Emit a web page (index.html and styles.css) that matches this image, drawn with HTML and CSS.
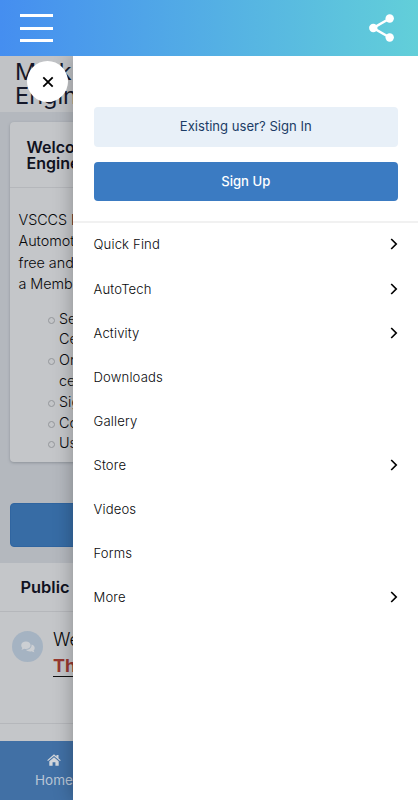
FILE: index.html
```html
<!DOCTYPE html>
<html lang="en">
<head>
<meta charset="utf-8">
<meta name="viewport" content="width=device-width">
<title>Menu</title>
<link rel="stylesheet" href="styles.css">
</head>
<body>
<svg width="0" height="0" class="defs"><symbol id="chev" viewBox="0 0 8 12"><path d="m1.200 1 5 5-5 5" fill="none" stroke="#000" stroke-width="1.700"/></symbol></svg>
<div class="app">
  <header class="topbar">
    <div class="burger"><i></i><i></i><i></i></div>
    <svg class="share" width="26" height="28" viewBox="0 0 26 28"><path d="M20.700 4.500 4.300 14 20.700 23.500" fill="none" stroke="#fff" stroke-width="2.600"/><g fill="#fff"><circle cx="20.700" cy="4.500" r="4.200"/><circle cx="4.300" cy="14" r="4.200"/><circle cx="20.700" cy="23.500" r="4.200"/></g></svg>
  </header>
  <div class="stage">
    <main class="page">
      <h1>Mark<br>Engin</h1>
      <section class="card">
        <h2>Welco<br>Engine</h2>
        <div class="copy">
          <p>VSCCS I<br>Automot<br>free and<br>a Memb</p>
          <ul>
            <li>Se<br>Ce</li>
            <li>On<br>ce</li>
            <li>Sig</li>
            <li>Co</li>
            <li>Us</li>
          </ul>
        </div>
      </section>
      <div class="cta"></div>
      <section class="public">
        <h3>Public</h3>
        <div class="topic">
          <span class="avatar"><svg width="14" height="12" viewBox="0 0 14 12"><path fill="#cccfd3" d="M9.600 4.200C9.600 6.300 7.500 8 4.900 8c-.6 0-1.200-.1-1.700-.2C2.300 8.400 1.300 8.700.3 8.700c.5-.5.9-1.100 1-1.700C.6 6.200.2 5.300.2 4.200.2 2.100 2.300.5 4.900.5s4.700 1.600 4.700 3.700ZM10.500 3.500c1.900.4 3.200 1.700 3.200 3.400 0 1-.4 1.900-1.100 2.600.1.700.5 1.200 1 1.700-1 0-2-.3-2.900-.9-2.400.5-4.700-.1-5.800-1.500 3.400 0 6-2 5.600-5.300Z"/></svg></span>
          <p>We<br><b>The</b></p>
        </div>
      </section>
      <nav class="tabbar">
        <div class="tab">
          <svg width="14" height="12" viewBox="0 0 14 12"><path fill="#d2d6db" d="M7 .3 9.500 2.500V1h2v3.200l2.300 2-.8.9L7 2 1 7.100l-.8-.9ZM7 3.200l4.700 4v4.500H8.400V8.300H5.600v3.400H2.300V7.200Z"/></svg>
          <span>Home</span>
        </div>
      </nav>
    </main>
    <aside class="drawer">
      <div class="account">
        <a class="btn signin">Existing user? Sign In</a>
        <a class="btn signup">Sign Up</a>
      </div>
      <ul class="menu">
        <li>Quick Find<svg><use href="#chev"/></svg></li>
        <li>AutoTech<svg><use href="#chev"/></svg></li>
        <li>Activity<svg><use href="#chev"/></svg></li>
        <li>Downloads</li>
        <li>Gallery</li>
        <li>Store<svg><use href="#chev"/></svg></li>
        <li>Videos</li>
        <li>Forms</li>
        <li>More<svg><use href="#chev"/></svg></li>
      </ul>
    </aside>
    <div class="close"><svg width="12" height="12" viewBox="0 0 12 12"><path d="m1.300 1.300 9.400 9.400m0-9.400-9.400 9.400" stroke="#000" stroke-width="1.800"/></svg></div>
  </div>
</div>
</body>
</html>
```
FILE: styles.css
```css
* { box-sizing: border-box; }
body, h1, h2, h3, p, ul { margin: 0; padding: 0; }
ul { list-style: none; }
body { font-family: Inter, "Liberation Sans", sans-serif; color: #08090b; }
.defs { position: absolute; }
.app { height: 800px; overflow: hidden; display: flex; flex-direction: column; }

.topbar {
  height: 56px; flex: none; padding: 0 23px 0 20px;
  display: flex; align-items: center; justify-content: space-between;
  background: linear-gradient(90deg, #458ef0, #62cfd9);
}
.burger { width: 33px; display: grid; gap: 9.500px; }
.burger i { height: 3px; background: #fff; }

.stage { position: relative; flex: 1; display: flex; overflow: hidden; }
.page {
  width: 73px; flex: none; overflow: hidden; white-space: nowrap;
  display: flex; flex-direction: column; background: #b4b8be;
}
.page h1 {
  height: 56px; flex: none; padding: 4px 0 0 15px; background: #c1c3c6;
  font-size: 23.500px; line-height: 24px; font-weight: 400; color: #15182a;
}
.card {
  width: 390px; height: 340px; flex: none; margin: 10px 0 0 10px;
  background: #c4c6c9; border-radius: 4px; box-shadow: 0 1px 3px #8d929a;
}
.card h2 {
  height: 66px; padding: 17px 0 0 16.500px; border-bottom: 1px solid #b5b7bb;
  font-size: 16px; line-height: 16px; font-weight: 600; color: #10121f;
}
.copy { padding: 21px 0 0 8.500px; font-size: 14.400px; line-height: 21.400px; font-weight: 300; }
.copy p { letter-spacing: -.05px; }
.copy ul { padding: 14px 0 0 40.500px; line-height: 20.800px; }
.copy li { position: relative; }
.copy li::before {
  content: ""; position: absolute; left: -11px; top: 8px;
  width: 5px; height: 5px; border: 1px solid #94979b; border-radius: 50%;
}
.cta { width: 390px; height: 44px; flex: none; margin: 41px 0 16px 10px; background: #376ca5; border: 1px solid #3065a0; border-radius: 4px; }
.public { flex: 1; width: 418px; background: #c4c6c9; }
.public h3 {
  height: 49px; padding-left: 20.500px; border-bottom: 1px solid #b5b7bb;
  font-size: 16.400px; line-height: 49px; font-weight: 600; color: #10121f;
}
.topic { height: 112px; padding: 15px 0 0 12px; display: flex; gap: 10px; border-bottom: 1px solid #b5b7bb; }
.avatar { width: 31px; height: 31px; margin-top: 4px; border-radius: 50%; background: #a5b3c2; display: grid; place-items: center; }
.topic p { font-size: 18px; line-height: 26px; font-weight: 300; }
.topic b { font-weight: 700; color: #97382f; border-bottom: 1.500px solid #111; }
.tabbar { height: 59px; flex: none; width: 418px; background: #4170a5; }
.tab { width: 108px; padding-top: 13px; display: flex; flex-direction: column; align-items: center; gap: 5px; font-size: 13.500px; line-height: 18px; font-weight: 400; color: #b9c6d6; }

.drawer { position: relative; flex: 1; background: #fff; box-shadow: 0 0 18px rgba(0, 0, 0, .3); }
.account { height: 167px; padding: 51px 20px 0 20.500px; border-bottom: 2px solid #f1f1f1; display: flex; flex-direction: column; gap: 15px; }
.btn { height: 39.500px; flex: none; border-radius: 4px; font-size: 13.100px; line-height: 39.500px; text-align: center; }
.signin { background: #e8f0f8; color: #1c3d66; }
.signup { background: #3b7bc2; color: #fff; font-weight: 500; }
.menu { margin-top: -.6px; padding: 0 20px 0 20.500px; }
.menu li { height: 44.100px; display: flex; align-items: center; justify-content: space-between; font-size: 13.100px; font-weight: 300; letter-spacing: .15px; }
.menu svg { width: 8px; height: 12px; }

.close { position: absolute; left: 27px; top: 5px; width: 41px; height: 41px; border-radius: 50%; background: #fff; display: grid; place-items: center; }
```
